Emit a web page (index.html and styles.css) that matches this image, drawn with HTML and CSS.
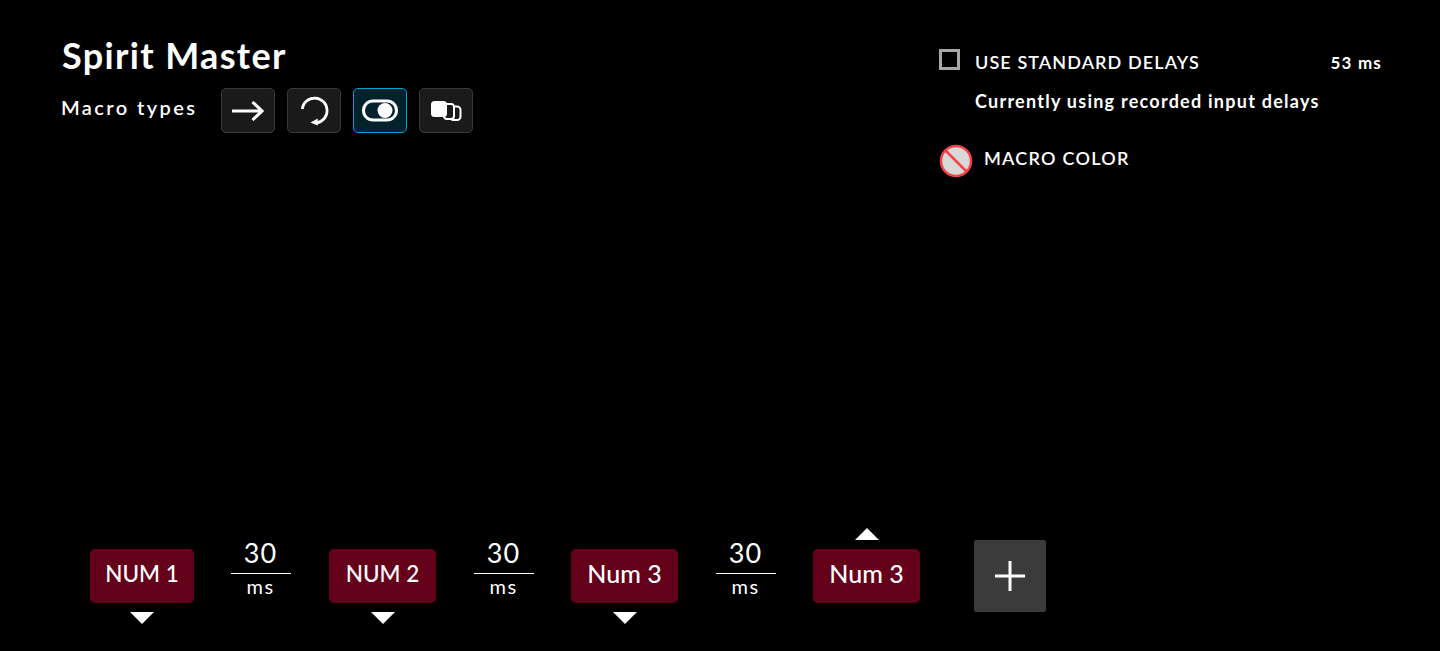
FILE: index.html
```html
<!DOCTYPE html>
<html lang="en-us">
  <head>
    <meta charset="utf-8">
    <title>Spirit Master</title>
    <link rel="stylesheet" href="styles.css">
  </head>
  <body>
    <div id="editor">
      <div class="top">
        <div class="info">
          <h1 class="title">Spirit Master</h1>
          <div class="types">
            <span class="types-label">Macro types</span>
            <div class="type-btns">
              <div class="type-btn">
                <svg width="32" height="20" viewBox="0 0 32 20"><path d="M0 10H30M20.500 1L30 10L20.500 19" fill="none" stroke="#fff" stroke-width="3"/></svg>
              </div>
              <div class="type-btn">
                <svg width="30" height="32" viewBox="0 0 30 32"><path d="M3.200 14A12.500 12.500 0 1 1 17 28" fill="none" stroke="#fff" stroke-width="2.700"/><path d="M11.500 27.500L18.700 23.500V30.500Z" fill="#fff"/></svg>
              </div>
              <div class="type-btn active">
                <svg width="36" height="24" viewBox="0 0 36 24"><rect x="1.500" y="2" width="33" height="19" rx="9.500" fill="none" stroke="#fff" stroke-width="3"/><circle cx="23" cy="11.500" r="7.500" fill="#fff"/></svg>
              </div>
              <div class="type-btn">
                <svg width="32" height="22" viewBox="0 0 32 22"><rect x="20" y="6.500" width="10.500" height="13.500" rx="3.500" fill="none" stroke="#fff" stroke-width="2"/><rect x="14" y="4" width="10" height="15" rx="3" fill="#1a1a1a" stroke="#fff" stroke-width="2"/><rect x="1" y="1" width="16" height="16" rx="3.500" fill="#fff"/></svg>
              </div>
            </div>
          </div>
        </div>
        <div class="options">
          <div class="delays-row">
            <span class="checkbox"></span>
            <span class="opt-label">USE STANDARD DELAYS</span>
            <span class="delay-val">53 ms</span>
          </div>
          <p class="delays-note">Currently using recorded input delays</p>
          <div class="color-row">
            <svg width="34" height="34" viewBox="0 0 34 34"><circle cx="17" cy="17" r="15" fill="#d9d9d9" stroke="#f54343" stroke-width="2.500"/><path d="M6.500 6.500L27.500 27.500" stroke="#f54343" stroke-width="2.500"/></svg>
            <span class="opt-label color-label">MACRO COLOR</span>
          </div>
        </div>
      </div>
      <div class="steps">
        <div class="key down narrow">NUM 1</div>
        <div class="delay first"><span class="num">30</span><span class="unit">ms</span></div>
        <div class="key down">NUM 2</div>
        <div class="delay"><span class="num">30</span><span class="unit">ms</span></div>
        <div class="key down lower">Num 3</div>
        <div class="delay"><span class="num">30</span><span class="unit">ms</span></div>
        <div class="key up lower">Num 3</div>
        <div class="add">
          <svg width="32" height="32" viewBox="0 0 32 32"><path d="M16 1V31M1 16H31" stroke="#fff" stroke-width="3"/></svg>
        </div>
      </div>
    </div>
  </body>
</html>
```

FILE: styles.css
```css
body { padding: 0; margin: 0; background: #000; color: #fff; font-family: 'Lato', sans-serif; }

#editor {
  display: flex;
  flex-direction: column;
  justify-content: space-between;
  height: 651px;
  box-sizing: border-box;
  padding: 34px 58px 36px 61px;
}

.top {
  display: flex;
  justify-content: space-between;
}

.title {
  margin: 0 0 12px 1px;
  font-size: 36px;
  line-height: 42px;
  font-weight: 700;
  letter-spacing: 1.35px;
}

.types {
  display: flex;
  align-items: center;
  gap: 24px;
}

.types-label {
  width: 136px;
  padding-bottom: 8px;
  font-size: 20px;
  font-weight: 600;
  letter-spacing: 2.4px;
  white-space: nowrap;
}

.type-btns {
  display: flex;
  gap: 12px;
}

.type-btn {
  display: flex;
  align-items: center;
  justify-content: center;
  width: 54px;
  height: 45px;
  box-sizing: border-box;
  background: #1a1a1a;
  border: 1px solid #3a3a3a;
  border-radius: 5px;
}

.type-btn.active {
  background: #02222e;
  border-color: #00a0d8;
}

.options {
  width: 443px;
  padding-top: 15px;
}

.delays-row {
  display: flex;
  align-items: center;
  height: 26px;
}

.checkbox {
  align-self: flex-start;
  width: 21px;
  height: 21px;
  box-sizing: border-box;
  border: 3px solid #a6a6a6;
  margin-right: 15px;
}

.opt-label {
  font-size: 18px;
  font-weight: 600;
  letter-spacing: 1.1px;
}

.delay-val {
  margin-left: auto;
  font-size: 17px;
  font-weight: 700;
  letter-spacing: 1.2px;
}

.delays-note {
  margin: 15px 0 0 36px;
  font-size: 18px;
  line-height: 22px;
  font-weight: 700;
  letter-spacing: 1.25px;
}

.color-row {
  display: flex;
  align-items: center;
  gap: 11px;
  margin-top: 32px;
}

.color-label {
  padding-bottom: 6px;
  letter-spacing: 1.25px;
}

.steps {
  display: flex;
  align-items: center;
  gap: 37.5px;
  padding-left: 29px;
}

.key {
  position: relative;
  display: flex;
  align-items: center;
  justify-content: center;
  width: 107px;
  height: 54px;
  box-sizing: border-box;
  padding-bottom: 6px;
  background: #65001a;
  border-radius: 5px;
  font-size: 22.5px;
  font-weight: 500;
}

.key.narrow { width: 104px; }
.key.lower { font-size: 25px; }

.key.down::after,
.key.up::before {
  content: "";
  position: absolute;
  left: 50%;
  transform: translateX(-50%);
  border-left: 12px solid transparent;
  border-right: 12px solid transparent;
}

.key.down::after {
  top: 63px;
  border-top: 12px solid #fff;
}

.key.up::before {
  top: -21px;
  border-bottom: 12px solid #fff;
}

.delay {
  display: flex;
  flex-direction: column;
  align-items: center;
  width: 60px;
  padding-bottom: 16px;
}

.delay.first {
  margin: 0 1px 0 -1px;
}

.num {
  width: 100%;
  padding-bottom: 4px;
  text-align: center;
  font-size: 27px;
  line-height: 32px;
  border-bottom: 1px solid #fff;
  letter-spacing: 1px;
}

.unit {
  font-size: 20px;
  line-height: 25px;
  letter-spacing: 1.5px;
}

.add {
  display: flex;
  align-items: center;
  justify-content: center;
  width: 72px;
  height: 72px;
  margin-left: 16px;
  background: #3b3b3b;
  border-radius: 2px;
}
```
